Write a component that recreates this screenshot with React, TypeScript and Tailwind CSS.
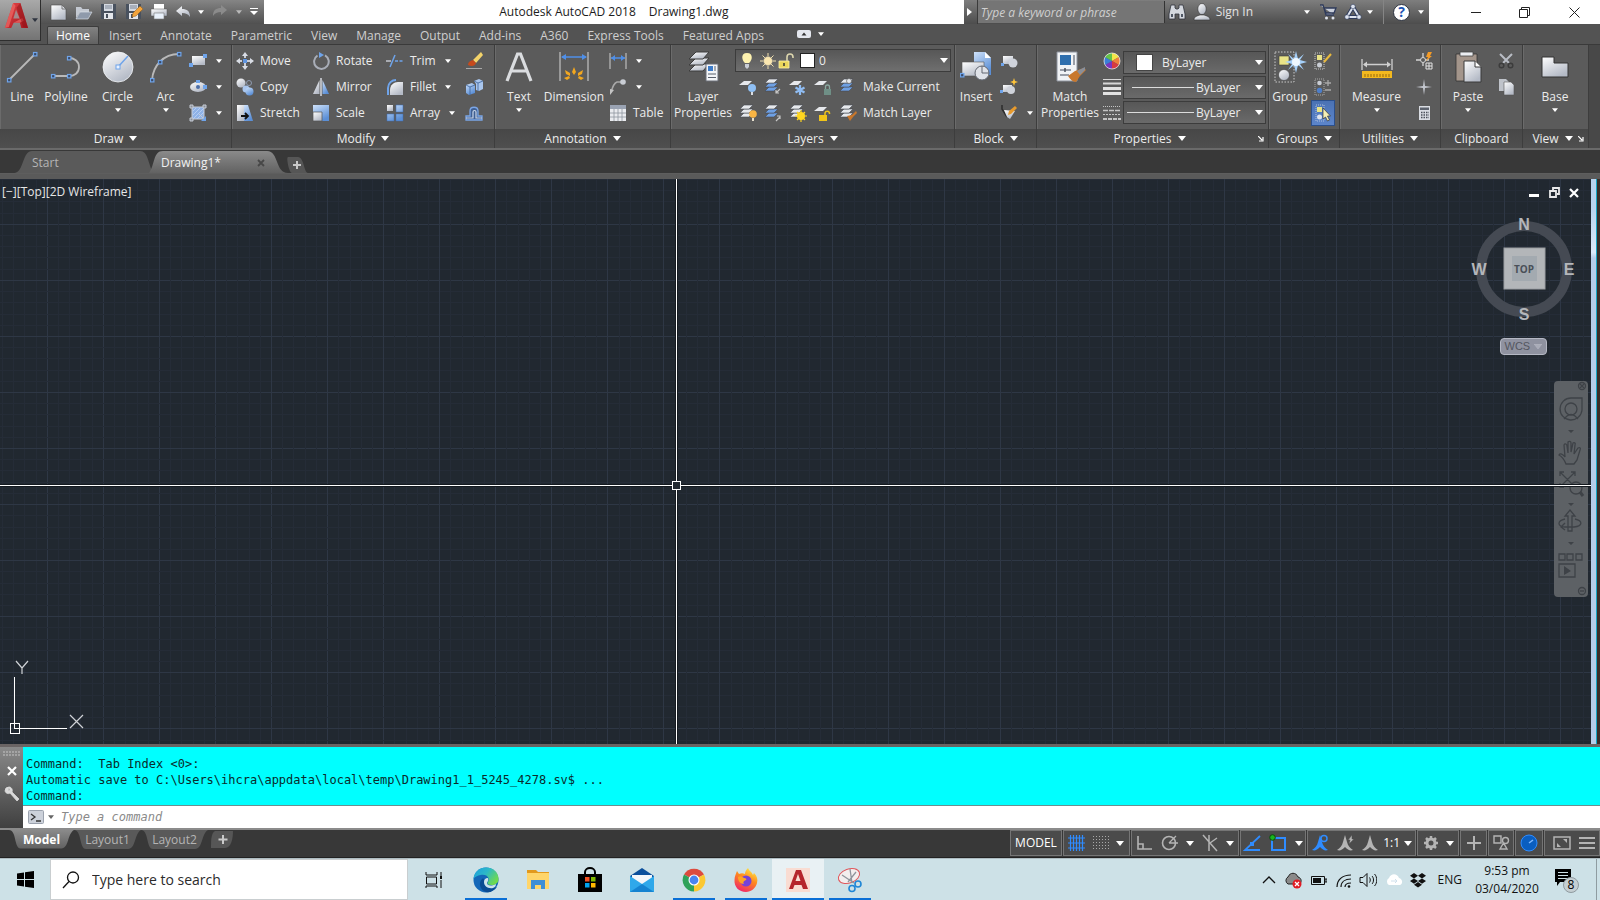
import type { ReactNode } from 'react'
import clsx from 'clsx'

const BLUE = '#6fa4ea'

interface IcoProps {
  w?: number
  h?: number
  box?: string
  className?: string
  children: ReactNode
}

function Ico({ w = 18, h = w, box, className, children }: IcoProps) {
  return (
    <svg width={w} height={h} viewBox={box ?? `0 0 ${w} ${h}`} fill="none" className={clsx('shrink-0', className)} aria-hidden="true">
      {children}
    </svg>
  )
}

function Arrow({ className = 'text-white', big }: { className?: string; big?: boolean }) {
  return (
    <svg width={big ? 8 : 6} height={big ? 5 : 4} viewBox="0 0 8 5" className={clsx('shrink-0', className)} aria-hidden="true">
      <path d="M0 0h8L4 5z" fill="currentColor" />
    </svg>
  )
}

function Grip({ x, y }: { x: number; y: number }) {
  return <rect x={x - 1.5} y={y - 1.5} width="3.4" height="3.4" fill="#3a4a66" stroke={BLUE} strokeWidth="1.2" />
}

function Defs() {
  return (
    <svg width="0" height="0" className="absolute" aria-hidden="true">
      <defs>
        <linearGradient id="silver" x1="0" y1="0" x2="0.6" y2="1">
          <stop offset="0" stopColor="#ffffff" />
          <stop offset="1" stopColor="#b4bac6" />
        </linearGradient>
        <linearGradient id="sky" x1="0" y1="0" x2="0.5" y2="1">
          <stop offset="0" stopColor="#cfe2fa" />
          <stop offset="1" stopColor="#5b8fd6" />
        </linearGradient>
        <linearGradient id="tab" x1="0" y1="0" x2="0" y2="1">
          <stop offset="0" stopColor="#8a8a8a" />
          <stop offset="1" stopColor="#626262" />
        </linearGradient>
        <linearGradient id="red" x1="0" y1="0" x2="1" y2="1">
          <stop offset="0" stopColor="#e8484a" />
          <stop offset="1" stopColor="#a3141c" />
        </linearGradient>
        <linearGradient id="edge" x1="0" y1="0" x2="1" y2="0.6">
          <stop offset="0" stopColor="#1b9de0" />
          <stop offset="0.5" stopColor="#2cb8c8" />
          <stop offset="1" stopColor="#6fdb4e" />
        </linearGradient>
        <linearGradient id="fox" x1="0.8" y1="0" x2="0.3" y2="1">
          <stop offset="0" stopColor="#fff04a" />
          <stop offset="0.45" stopColor="#ff8a1e" />
          <stop offset="1" stopColor="#f0246a" />
        </linearGradient>
      </defs>
    </svg>
  )
}

function LetterA({ size }: { size: number }) {
  return (
    <Ico w={size} box="0 0 26 28">
      <path d="M1 27 9.5 1h7.5L25 27h-7l-1.500-5.500H10L7.500 27z" fill="url(#red)" />
      <path d="m12.500 8-2.800 9h6.600z" fill="#a5898b" />
      <path d="M9.500 1 12 4 5 26l-4 1zM10 21.500l9-5 1.500 3-4 2z" fill="#ee6a66" opacity="0.7" />
      <path d="m17 1-4 5 7 20 5 1z" fill="#8e1118" opacity="0.5" />
    </Ico>
  )
}

/* ---------- title bar ---------- */

function Floppy() {
  return (
    <>
      <path d="M1 1h15v15H1z" fill="#49525f" />
      <path d="M4 1h9v7H4z" fill="#d5dae2" />
      <path d="M5 3h7M5 5h7" stroke="#7b8494" />
      <path d="M4 10h9v6H4z" fill="#e4e7ec" />
      <path d="M6 11h2v4H6z" fill="#49525f" />
    </>
  )
}

function QuickAccess() {
  return (
    <div className="flex h-6 items-center gap-[7px] bg-linear-to-b from-[#858585] to-[#505050] pr-[5px] pl-[50px]">
      <button aria-label="New">
        <Ico>
          <path d="M1 2h11l4 4v11H1z" fill="url(#silver)" stroke="#4b4b4b" strokeWidth="0.6" />
          <path d="M12 2v4h4" stroke="#666" strokeWidth="0.8" />
        </Ico>
      </button>
      <button aria-label="Open">
        <Ico>
          <path d="M1 4h5l1.500 2H14v3H5l-4 6z" fill="#c4c9d2" />
          <path d="M5 9h12l-4 7H1z" fill="#8f9aab" stroke="#e3e7ee" strokeWidth="0.6" />
        </Ico>
      </button>
      <button aria-label="Save"><Ico><Floppy /></Ico></button>
      <button aria-label="Save As">
        <Ico>
          <Floppy />
          <path d="m7 14 1-4 7-7 3 3-7 7z" fill="#f3a43c" stroke="#8a5a1a" strokeWidth="0.5" />
        </Ico>
      </button>
      <button aria-label="Plot">
        <Ico>
          <path d="M4 1h10v6H4z" fill="#fff" />
          <path d="M1 6h16v7H1z" fill="url(#silver)" stroke="#555" strokeWidth="0.5" />
          <path d="M4 10h10v6H4z" fill="#e9f1fb" stroke="#777" strokeWidth="0.6" />
        </Ico>
      </button>
      <button aria-label="Undo">
        <Ico w={16}><path d="M1 7 7 2v3c5 0 8 2 8 8-2-3-4-4-8-4v3z" fill="url(#silver)" /></Ico>
      </button>
      <Arrow />
      <button aria-label="Redo">
        <Ico><path d="M16 7 10 2v3C5 5 2 7 2 13c2-3 4-4 8-4v3z" fill="#8b8b8b" /></Ico>
      </button>
      <Arrow className="text-[#b9b9b9]" />
      <button aria-label="Customize Quick Access Toolbar">
        <Ico w={10}><path d="M1 1.500h8" stroke="#fff" /><path d="M1 4h8L5 8z" fill="#fff" /></Ico>
      </button>
    </div>
  )
}

function TitleBar() {
  return (
    <header className="relative flex h-6 bg-white">
      <QuickAccess />
      <button
        aria-label="Application menu"
        className="absolute top-0 left-0 z-10 flex h-[41px] w-[41px] items-start gap-[2px] border-r border-b border-[#2e2e2e] bg-linear-to-b from-[#a9a9a9] to-[#747474] pt-[2px] pl-[3px]"
      >
        <LetterA size={27} />
        <Arrow className="mt-4 text-[#2f3540]" />
      </button>
      <h1 className="flex flex-1 items-center justify-center gap-[13px] text-xs text-[#1c1c1c]">
        <span>Autodesk AutoCAD 2018</span>
        <span>Drawing1.dwg</span>
      </h1>
      <div className="flex items-center bg-linear-to-b from-[#7e7e7e] to-[#4d4d4d]">
        <button aria-label="Collapse search" className="flex h-6 w-[14px] items-center justify-center border-r border-[#3a3a3a]">
          <Ico w={6} h={8}><path d="M0 0v8l5-4z" fill="#fff" /></Ico>
        </button>
        <input
          aria-label="Search"
          placeholder="Type a keyword or phrase"
          className="h-[22px] w-[187px] border-r border-[#333] bg-[#757575] px-[3px] text-xs text-white italic placeholder:text-[#cfcfcf]"
        />
        <button aria-label="Find" className="ml-[3px]">
          <Ico>
            <path d="M3 2h4v3l1 1h2l1-1V2h4l2 9v5h-6v-5H7v5H1v-5z" fill="#d4d8df" stroke="#30343c" strokeWidth="0.8" />
            <path d="M3 11h2v3H3zM13 11h2v3h-2z" fill="#4f5765" />
          </Ico>
        </button>
        <button className="ml-[7px] flex items-center gap-[5px] text-xs text-[#e3e3e3]">
          <Ico>
            <ellipse cx="9" cy="6" rx="4.200" ry="5.500" fill="url(#silver)" stroke="#333" strokeWidth="0.6" />
            <path d="M1 17c0-4 4-4 6-5h4c2 1 6 1 6 5z" fill="url(#silver)" stroke="#333" strokeWidth="0.6" />
          </Ico>
          Sign In
        </button>
        <Arrow className="ml-[51px] text-white" />
        <button aria-label="App Store" className="ml-[9px]">
          <Ico>
            <path d="M1 2h3l3 10h8M5 5h12l-2 5H7z" fill="#c9cfdb" stroke="#2e3a5a" strokeWidth="1.3" />
            <circle cx="7.500" cy="15" r="1.500" fill="#dfe4ee" />
            <circle cx="14" cy="15" r="1.500" fill="#dfe4ee" />
          </Ico>
        </button>
        <button aria-label="Autodesk A360" className="ml-[7px]">
          <Ico>
            <path d="M9 4 3 14h12z" stroke="#2e3a5a" strokeWidth="4" strokeLinejoin="round" />
            <path d="M9 4 3 14h12z" stroke="#dde3ef" strokeWidth="2" />
            <circle cx="9" cy="3.500" r="2.300" fill="#dde3ef" stroke="#2e3a5a" strokeWidth="0.6" />
            <circle cx="3" cy="14" r="2.300" fill="#dde3ef" stroke="#2e3a5a" strokeWidth="0.6" />
            <circle cx="15" cy="14" r="2.300" fill="#dde3ef" stroke="#2e3a5a" strokeWidth="0.6" />
          </Ico>
        </button>
        <Arrow className="ml-[5px] text-white" />
        <button aria-label="Help" className="ml-[10px] flex h-6 items-center gap-2 border-l border-[#858585] pr-[5px] pl-[9px]">
          <span className="flex h-[17px] w-[17px] items-center justify-center rounded-full border border-[#2d3340] bg-white text-sm leading-none font-bold text-[#1d54b4]">
            ?
          </span>
          <Arrow />
        </button>
      </div>
      <div className="flex items-center text-[#222]">
        <button aria-label="Minimize" className="flex w-[71px] justify-end pr-[19px]">
          <Ico w={10}><path d="M0 5.500h10" stroke="currentColor" /></Ico>
        </button>
        <button aria-label="Restore" className="flex w-12 justify-center">
          <Ico w={11}><path d="M.5 2.500h8v8h-8zM2.500 2V.5h8v8H9" stroke="currentColor" /></Ico>
        </button>
        <button aria-label="Close" className="flex w-[52px] justify-center">
          <Ico w={11}><path d="m.5.5 10 10M10.500.5l-10 10" stroke="currentColor" /></Ico>
        </button>
      </div>
    </header>
  )
}

const TABS = ['Insert', 'Annotate', 'Parametric', 'View', 'Manage', 'Output', 'Add-ins', 'A360', 'Express Tools', 'Featured Apps']

function RibbonTabs() {
  return (
    <nav className="flex h-[21px] items-end border-b border-[#3a3a3a] bg-[#535353] pl-[47px] text-xs text-[#cfcfcf]">
      <button className="h-[18px] rounded-t-xs border border-b-0 border-[#3c3c3c] bg-linear-to-b from-[#828282] to-[#626262] px-2 leading-4 text-white">
        Home
      </button>
      {TABS.map(tab => (
        <button key={tab} className="h-[18px] pr-[9px] pl-[10px] leading-[17px]">
          {tab}
        </button>
      ))}
      <button aria-label="Minimize ribbon" className="mb-[6px] ml-6 flex items-center gap-[7px]">
        <Ico w={14} h={8}>
          <rect width="14" height="8" rx="2" fill="#e4e7ee" />
          <path d="M7 2.500 4.500 5.500h5z" fill="#333" />
        </Ico>
        <Arrow />
      </button>
    </nav>
  )
}

/* ---------- ribbon ---------- */

interface PanelProps {
  title: string
  className: string
  arrow?: boolean
  launcher?: boolean
  children: ReactNode
}

function Panel({ title, className, arrow = true, launcher, children }: PanelProps) {
  return (
    <section className={clsx('flex shrink-0 flex-col border-r border-[#3d3d3d] shadow-[inset_1px_0_0_#6b6b6b]', className)}>
      <div className="flex h-[84px] items-start pt-[3px]">{children}</div>
      <div className="flex h-[19px] items-center bg-linear-to-b from-[#474747] to-[#4f4f4f] px-1">
        <h2 className="flex flex-1 items-center justify-center gap-[6px] text-xs">
          {title}
          {arrow && <Arrow big />}
        </h2>
        {launcher && (
          <button aria-label={`${title} settings`}>
            <Ico w={6}><path d="M0 0l4 4M5 1v4H1" stroke="#fff" strokeWidth="1.2" /></Ico>
          </button>
        )}
      </div>
    </section>
  )
}

interface BigProps {
  label: string
  label2?: string
  icon: ReactNode
  arrow?: boolean
  className: string
}

function Big({ label, label2, icon, arrow, className }: BigProps) {
  return (
    <button className={clsx('flex shrink-0 flex-col items-center pt-[3px] text-xs leading-4', className)}>
      <span className="flex h-[32px] items-center">{icon}</span>
      <span className="mt-[6px]">{label}</span>
      {label2 && <span>{label2}</span>}
      {arrow && <Arrow className="mt-[3px] text-white" />}
    </button>
  )
}

interface SmallProps {
  label: string
  text?: boolean
  icon: ReactNode
  arrow?: boolean
  active?: boolean
}

function Small({ label, text = true, icon, arrow, active }: SmallProps) {
  return (
    <button
      aria-label={label}
      className={clsx('flex h-[26px] items-center gap-[6px] text-xs', active && 'bg-linear-to-b from-[#4a71b3] to-[#5d86cc] outline -outline-offset-1 outline-[#2b4f8c]')}
    >
      {icon}
      {text && <span>{label}</span>}
      {arrow && <Arrow className="ml-[3px] text-white" />}
    </button>
  )
}

function DrawPanel() {
  return (
    <Panel title="Draw" className="w-[232px]">
      <Big className="w-[44px]" label="Line" icon={<Ico w={32}><path d="M4 28 28 4" stroke="#b9b9b9" strokeWidth="1.800" /><Grip x={3} y={29} /><Grip x={29} y={3} /></Ico>} />
      <Big
        className="w-[44px]"
        label="Polyline"
        icon={<Ico w={32}><path d="M3 25h17c4 0 9-3 9-9s-5-9-10-9" stroke="#b9b9b9" strokeWidth="1.800" /><Grip x={3} y={25} /><Grip x={19} y={25} /><Grip x={19} y={7} /></Ico>}
      />
      <Big
        className="w-[59px]"
        label="Circle"
        arrow
        icon={
          <Ico w={32}>
            <circle cx="16" cy="16" r="15" fill="url(#silver)" stroke="#f3f5f8" strokeWidth="0.8" />
            <path d="M16 16 26 5" stroke={BLUE} strokeWidth="1.500" />
            <rect x="14" y="14" width="4" height="4" fill="#e8f1ff" stroke={BLUE} />
          </Ico>
        }
      />
      <Big
        className="w-[37px]"
        label="Arc"
        arrow
        icon={<Ico w={32}><path d="M2 29C3 15 13 3 29 3" stroke="#b9b9b9" strokeWidth="1.800" /><Grip x={2} y={29} /><Grip x={10} y={11} /><Grip x={29} y={3} /></Ico>}
      />
      <div className="ml-[5px]">
        <Small
          label="Rectangle" text={false} arrow
          icon={<Ico><path d="M3 4h13v9H3z" fill="url(#silver)" /><path d="M0 11h4v4H0zM14 2h4v4h-4z" fill={BLUE} /></Ico>}
        />
        <Small
          label="Ellipse" text={false} arrow
          icon={<Ico><ellipse cx="9" cy="9" rx="8" ry="5" fill="url(#silver)" /><circle cx="9" cy="9" r="2" fill="#4c6ea8" /><path d="M7 2h4v3H7zM14 7h4v4h-4z" fill={BLUE} /></Ico>}
        />
        <Small
          label="Hatch" text={false} arrow
          icon={
            <Ico>
              <path d="M3 3h12v12H3z" fill="#8fb2e6" stroke="#c9cfd9" />
              <path d="m4 7 3-3M4 11l7-7M4 15 15 4M8 15l7-7" stroke="#b5cdf2" />
              <path d="M1 1h3v3H1zM14 1h3v3h-3zM1 14h3v3H1zM10 10l7 7" stroke="#c6ccd6" fill="#8b9099" />
              <path d="m12 17 5-5v5z" fill={BLUE} />
            </Ico>
          }
        />
      </div>
    </Panel>
  )
}

function ModifyPanel() {
  return (
    <Panel title="Modify" className="w-[263px]">
      <div className="ml-1 w-[76px]">
        <Small
          label="Move"
          icon={
            <Ico>
              <path d="M9 3v12M3 9h12" stroke="#c9ced8" strokeWidth="2" strokeDasharray="3 1" />
              <path d="m9 0 3 4H6zM9 18l3-4H6zM0 9l4-3v6zM18 9l-4-3v6z" fill="#d9dde5" />
              <path d="M7 7h4v4H7z" fill="#5f94df" />
            </Ico>
          }
        />
        <Small
          label="Copy"
          icon={
            <Ico>
              <circle cx="5" cy="5" r="4.500" fill="url(#silver)" />
              <circle cx="13" cy="5" r="2.500" stroke="#8f9bb0" />
              <circle cx="10" cy="11" r="3.500" fill="#a9c6ee" />
              <circle cx="13.500" cy="13.500" r="4" fill="url(#sky)" />
            </Ico>
          }
        />
        <Small
          label="Stretch"
          icon={
            <Ico>
              <path d="M1 1h7v16H1z" fill="url(#silver)" />
              <path d="M8 1h4l5 16H8z" fill="url(#sky)" />
              <path d="M5 12h7M9 9l3 3-3 3" stroke="#111" strokeWidth="1.800" />
            </Ico>
          }
        />
      </div>
      <div className="w-[74px]">
        <Small
          label="Rotate"
          icon={<Ico><path d="M5.500 3.500A7.300 7.300 0 1 0 13 3.300" stroke="#a9aeb8" strokeWidth="2" /><path d="M7 0l5 3-5 3z" fill={BLUE} /></Ico>}
        />
        <Small
          label="Mirror"
          icon={<Ico><path d="M7.500 2v14H1z" fill="url(#silver)" /><path d="M10.500 2v14H17z" fill="url(#sky)" /><path d="M9 0v18" stroke="#d6d9df" strokeWidth="1.500" /></Ico>}
        />
        <Small label="Scale" icon={<Ico><path d="M1 1h16v16H1z" fill="url(#sky)" /><path d="M1 8h9v9H1z" fill="url(#silver)" stroke="#555" strokeWidth="0.7" /></Ico>} />
      </div>
      <div className="w-[79px]">
        <Small
          label="Trim" arrow
          icon={<Ico><path d="M0 9h5" stroke="#c3c7cf" strokeWidth="1.500" /><path d="M9 9h9" stroke={BLUE} strokeWidth="1.500" strokeDasharray="3 1.500" /><path d="M4 15 9 3" stroke={BLUE} strokeWidth="1.500" /></Ico>}
        />
        <Small label="Fillet" arrow icon={<Ico><path d="M2 17V10c0-5 4-8 8-8" stroke={BLUE} strokeWidth="2" /><path d="M4 17v-5c0-5 4-8 8-8h5v13z" fill="url(#silver)" /></Ico>} />
        <Small
          label="Array" arrow
          icon={<Ico><path d="M1 1h6v6H1z" fill="url(#silver)" /><path d="M10 1h7v7h-7zM1 10h7v7H1zM10 10h7v7h-7z" fill="url(#sky)" stroke="#3f6fb5" strokeWidth="0.5" /></Ico>}
        />
      </div>
      <div>
        <Small
          label="Erase" text={false}
          icon={<Ico><path d="M1 16.500h16" stroke="#a9a9a9" /><path d="m8 8 8-8 2 3-7 8z" fill="#f3d36a" /><path d="M3 13c0-3 2-4 5-5l3 3c-1 3-4 4-8 2z" fill="#c64a1c" /></Ico>}
        />
        <Small
          label="Explode" text={false}
          icon={<Ico><path d="m1 7 6-2 3 2v8l-6 2-3-2z" fill="url(#sky)" /><path d="m9 3 5-2 4 2v8l-4 2-3-1V6z" fill="#a9c6ee" /><path d="m9 3 4 2 5-2M13 5v8M1 7l4 2 5-2M5 9v8" stroke="#3c6299" strokeWidth="0.8" /></Ico>}
        />
        <Small
          label="Offset" text={false}
          icon={
            <Ico>
              <path d="M1 12h4V7c0-5 8-5 8 0v5h4v4H1z" fill="#3f5f92" stroke="#7ba6e6" strokeWidth="1.300" />
              <path d="M1 14h7V8c0-2 3-2 3 0v6h6" stroke="#c9d6ea" strokeWidth="1.200" />
            </Ico>
          }
        />
      </div>
    </Panel>
  )
}

function AnnotationPanel() {
  return (
    <Panel title="Annotation" className="w-[176px]">
      <Big className="w-[48px]" label="Text" arrow icon={<Ico w={28} h={32}><path d="M2 30 12.500 3h3L26 30M6 20h16" stroke="#dadcdf" strokeWidth="3.200" /></Ico>} />
      <Big
        className="w-[62px]"
        label="Dimension"
        icon={
          <Ico w={32}>
            <path d="M2 1v29M30 1v29" stroke="#a9a9a9" strokeWidth="1.600" />
            <path d="M4 6h24" stroke="#4f8fe8" strokeWidth="1.500" />
            <path d="m3 6 5-3v6zM29 6l-5-3v6z" fill="#4f8fe8" />
            <path d="m16 16 2 5-2 3-2-3zM7 19l5 3v3l-4-2zM25 19l-5 3v3l4-2zM6 27l5-2 1 2-3 2zM26 27l-5-2-1 2 3 2z" fill="#f2a71f" />
          </Ico>
        }
      />
      <div className="ml-1">
        <Small
          label="Linear" text={false} arrow
          icon={<Ico><path d="M1 1v16M17 1v16" stroke="#a9a9a9" strokeWidth="1.500" /><path d="M2 6h14" stroke="#4f8fe8" strokeWidth="1.500" /><path d="m2 6 4-3v6zM16 6l-4-3v6z" fill="#4f8fe8" /></Ico>}
        />
        <Small
          label="Leader" text={false} arrow
          icon={<Ico><path d="M2 14C4 8 5 5 8 4h4" stroke="#a9a9a9" strokeWidth="1.400" /><path d="m1 17 0-6 4 1z" fill="#c4c4c4" /><circle cx="14" cy="4" r="2.800" fill="#c9cdd4" /></Ico>}
        />
        <Small
          label="Table"
          icon={<Ico><path d="M1 1h16v16H1z" fill="#e9ebef" /><path d="M1 1h16v4H1z" fill="#9aa3b3" /><path d="M1 9h16M1 13h16M5 5v12M9 5v12M13 5v12" stroke="#8d94a0" strokeWidth="0.8" /></Ico>}
        />
      </div>
    </Panel>
  )
}

function Stack({ blue }: { blue?: boolean }) {
  return (
    <>
      {[9, 5, 1].map(y => (
        <path key={y} d={`M5 ${y}h9l-4 4H1z`} fill={blue && y > 1 ? '#6ea0e4' : '#e6e8ec'} stroke="#464b54" strokeWidth="0.6" />
      ))}
    </>
  )
}

function Plate() {
  return <path d="M5 3h8l-4 4H0z" fill="#e6e8ec" />
}

const LAYER_TOOLS_TOP: { label: string; icon: ReactNode }[] = [
  { label: 'Layer Off', icon: <><Plate /><circle cx="13" cy="10" r="4" fill="#8fc0f5" /><path d="M12 14h2v3h-2z" fill="#d9dde3" /></> },
  { label: 'Isolate', icon: <><Stack blue /><path d="m16 11-4 4M12 12v3h3" stroke="#c7c7c7" strokeWidth="1.200" /></> },
  { label: 'Freeze', icon: <><Plate /><path d="M11 7v10M6.500 9.500l9 5M15.500 9.500l-9 5" stroke="#8fbcf2" strokeWidth="2.200" /></> },
  { label: 'Lock', icon: <><Plate /><path d="M10 11h7v6h-7z" fill="#6f8f86" /><path d="M11.500 11V9a2 2 0 0 1 4 0v2" stroke="#8aa79f" strokeWidth="1.300" /></> },
]

const LAYER_TOOLS_BOTTOM: { label: string; icon: ReactNode }[] = [
  { label: 'Turn All Layers On', icon: <><Stack /><circle cx="14" cy="10" r="3.800" fill="#f9b544" /><path d="M13 14h2v3h-2z" fill="#e8e1cf" /></> },
  { label: 'Unisolate', icon: <><Stack blue /><path d="m12 17 4-4M13 12h3v3" stroke="#c7c7c7" strokeWidth="1.200" /></> },
  { label: 'Thaw All Layers', icon: <><Stack /><circle cx="12" cy="12" r="4" fill="#ffd61f" /><path d="M12 6v12M6 12h12M8 8l8 8M16 8l-8 8" stroke="#ffd61f" strokeWidth="1.200" /></> },
  { label: 'Unlock', icon: <><Plate /><path d="M5 11h8v6H5z" fill="#f0c419" /><path d="M11 11V9a2.300 2.300 0 0 1 4.500 0v1" stroke="#f0c419" strokeWidth="1.500" /></> },
]

function LayersPanel() {
  return (
    <Panel title="Layers" className="w-[284px]">
      <Big
        className="w-[64px]"
        label="Layer"
        label2="Properties"
        icon={
          <Ico w={32}>
            {[13, 7, 1].map(y => (
              <path key={y} d={`M9 ${y}h13l-6 7H2z`} fill="url(#silver)" stroke="#3d3d3d" />
            ))}
            <path d="M19 13h12v17H19z" fill="#f3f5f8" stroke="#6a6f78" />
            <path d="M21 15h5v5h-5z" fill="#3d7cc9" />
            <path d="M28 15v5M21 23h8M21 26.500h8" stroke="#59606c" />
          </Ico>
        }
      />
      <div className="flex-1 pr-[3px]">
        <div className="mt-px mb-[2px] flex h-[23px] items-center border border-[#3c3c3c] bg-linear-to-b from-[#575757] to-[#6f6f6f] pl-[2px]">
          <Ico><path d="M9 1c7 0 5 8 2 10H7C4 9 2 1 9 1z" fill="#fff3b0" /><path d="M7 12h4v3l-2 2-2-2z" fill="#c9cdd6" /></Ico>
          <Ico className="ml-[3px]"><path d="M9 1v16M1 9h16M3.500 3.500l11 11M14.500 3.500l-11 11" stroke="#f0dfae" /><circle cx="9" cy="9" r="4.500" fill="#fbe7b0" stroke="#777" strokeWidth="0.5" /></Ico>
          <Ico><path d="M2 9h10v7H2z" fill="#ead65c" stroke="#fff2a5" strokeWidth="0.8" /><path d="M10 9V5c0-4 6-4 6 0v1" stroke="#ddd6ae" strokeWidth="1.600" /><path d="M7 11v3" stroke="#333" strokeWidth="1.500" /></Ico>
          <span className="ml-[5px] h-[15px] w-[15px] border border-[#222] bg-white" />
          <select aria-label="Layer" className="ml-1 flex-1 appearance-none bg-transparent text-xs outline-none">
            <option>0</option>
          </select>
          <Arrow big className="mr-[2px] text-white" />
        </div>
        <div className="flex gap-[7px] pl-1">
          {LAYER_TOOLS_TOP.map(t => (
            <Small key={t.label} label={t.label} text={false} icon={<Ico>{t.icon}</Ico>} />
          ))}
          <Small label="Make Current" icon={<Ico><Stack blue /><circle cx="10" cy="3" r="2.500" fill="#e4e7ec" stroke="#555" strokeWidth="0.6" /></Ico>} />
        </div>
        <div className="flex gap-[7px] pl-1">
          {LAYER_TOOLS_BOTTOM.map(t => (
            <Small key={t.label} label={t.label} text={false} icon={<Ico>{t.icon}</Ico>} />
          ))}
          <Small label="Match Layer" icon={<Ico><Stack /><path d="m8 12 5-1 4-4 1 2-4 4-3 4z" fill="#c9772b" /></Ico>} />
        </div>
      </div>
    </Panel>
  )
}

function BlockPanel() {
  return (
    <Panel title="Block" className="w-[82px]">
      <Big
        className="w-[42px]"
        label="Insert"
        icon={
          <Ico w={32}>
            <path d="M14 1h11l6 6v17H14z" fill="url(#sky)" />
            <path d="M25 1v6h6" fill="#fff" />
            <path d="M2 11h22v14H2z" fill="url(#silver)" stroke="#555" strokeWidth="0.6" />
            <circle cx="22" cy="22" r="7" fill="#dfe2e8" stroke="#626771" />
            <path d="M22 15v7h7" stroke="#626771" />
            <Grip x={2} y={24} />
          </Ico>
        }
      />
      <div className="ml-[3px]">
        <Small label="Create" text={false} icon={<Ico><path d="M3 4h10v8H3z" fill="url(#silver)" /><circle cx="13" cy="11" r="4.500" fill="#cfd3db" /><path d="M1 11h3v3H1z" fill={BLUE} /></Ico>} />
        <Small
          label="Edit" text={false}
          icon={<Ico><path d="M3 7h9v7H3z" fill="url(#silver)" /><circle cx="11" cy="12" r="4" fill="#cfd3db" /><path d="m14 0 1 3 3 1-3 1-1 3-1-3-3-1 3-1z" fill="#ffc53a" /><path d="M0 12h3v3H0z" fill={BLUE} /></Ico>}
        />
        <Small
          label="Edit Attributes" text={false} arrow
          icon={<Ico><path d="M2 1v4l5 8" stroke="#2c2c2c" strokeWidth="1.500" /><path d="m4 6 11 1-5 8-3-2z" fill="url(#silver)" /><path d="m8 11 1-4 6-5 2 2-6 6z" fill="#e79a2d" /></Ico>}
        />
      </div>
    </Panel>
  )
}

function PropertySelect({ label, before, inset }: { label: string; before: ReactNode; inset: string }) {
  return (
    <div className="mb-[2px] flex h-[23px] items-center border border-[#3c3c3c] bg-linear-to-b from-[#575757] to-[#6a6a6a]">
      {before}
      <select aria-label={label} className={clsx('min-w-0 flex-1 appearance-none bg-transparent text-xs outline-none', inset)}>
        <option>ByLayer</option>
      </select>
      <Arrow big className="mr-[2px] text-white" />
    </div>
  )
}

function PropertiesPanel() {
  return (
    <Panel title="Properties" className="w-[232px]" launcher>
      <Big
        className="w-[66px]"
        label="Match"
        label2="Properties"
        icon={
          <Ico w={32}>
            <path d="M3 1h20v29H3z" fill="#f1f3f6" stroke="#8d939e" />
            <path d="M6 4h11v10H6z" fill="#2f6fae" />
            <path d="M20 4v10M6 19h11M6 24h9" stroke="#7c828e" strokeWidth="1.500" />
            <path d="M11 17v4" stroke="#4a505c" strokeWidth="1.500" />
            <path d="m14 25 7-5 9-3 2 2-6 6-4 6c-3 0-6-3-8-6z" fill="#c8772c" />
            <path d="m23 20 8-4v3l-5 5z" fill="#8a8f99" />
          </Ico>
        }
      />
      <div className="flex w-[20px] flex-col">
        <Small
          label="Object Color" text={false}
          icon={
            <Ico>
              <path d="M9 9V1a8 8 0 0 1 7 4z" fill="#f3e648" />
              <path d="m9 9 7-4a8 8 0 0 1 0 8z" fill="#f0803c" />
              <path d="m9 9 7 4a8 8 0 0 1-7 4z" fill="#d83a3f" />
              <path d="M9 9v8a8 8 0 0 1-7-4z" fill="#7a35c0" />
              <path d="m9 9-7 4a8 8 0 0 1 0-8z" fill="#3b7fd8" />
              <path d="M9 9 2 5a8 8 0 0 1 7-4z" fill="#63c24a" />
              <circle cx="9" cy="9" r="8" stroke="#e5e5e5" strokeWidth="0.8" />
            </Ico>
          }
        />
        <Small label="Lineweight" text={false} icon={<Ico><path d="M0 1.500h18" stroke="#d7d7d7" /><path d="M0 5.500h18" stroke="#d7d7d7" strokeWidth="2" /><path d="M0 10.500h18M0 15.500h18" stroke="#e2e2e2" strokeWidth="3" /></Ico>} />
        <Small
          label="Linetype" text={false}
          icon={<Ico><path d="M0 2.500h18" stroke="#c4c4c4" strokeDasharray="1 1" /><path d="M0 6.500h18" stroke="#c4c4c4" strokeWidth="1.500" strokeDasharray="5 1" /><path d="M0 10.500h18" stroke="#c4c4c4" strokeDasharray="2 1" /><path d="M0 15h18" stroke="#c4c4c4" strokeWidth="2" strokeDasharray="4 1" /></Ico>}
        />
      </div>
      <div className="flex-1 pt-[3px] pr-[2px]">
        <PropertySelect label="Color" inset="ml-[9px]" before={<span className="ml-3 h-[17px] w-[17px] border border-[#444] bg-white" />} />
        <PropertySelect label="Weight" inset="ml-[2px]" before={<span className="ml-2 h-px w-[62px] bg-[#dcdcdc]" />} />
        <PropertySelect label="Line style" inset="ml-[2px]" before={<span className="ml-[3px] h-px w-[67px] bg-[#dcdcdc]" />} />
      </div>
    </Panel>
  )
}

function GroupsPanel() {
  return (
    <Panel title="Groups" className="w-[71px]">
      <Big
        className="w-[42px]"
        label="Group"
        icon={
          <Ico w={34} h={32}>
            <path d="M2 1h19v30H2z" stroke="#c9c9c9" strokeDasharray="1.500 1.500" />
            <path d="M6 5h10v9H6z" fill="#e9e387" stroke="#3d3d3d" strokeWidth="0.6" />
            <circle cx="11" cy="24" r="5.500" fill="url(#silver)" stroke="#3d3d3d" strokeWidth="0.6" />
            <path d="m23 0 2 8 6-5-4 6 7 2-7 2 4 6-6-5-2 8-2-8-6 5 4-6-7-2 7-2-4-6 6 5z" fill="#a5d0fa" />
            <circle cx="23" cy="11" r="4" fill="#eef7ff" />
          </Ico>
        }
      />
      <div>
        <div className="px-[3px]">
          <Small
            label="Ungroup" text={false}
            icon={<Ico><path d="M1 1h9v16H1z" stroke="#c9c9c9" strokeDasharray="1 1" /><path d="M3 3h5v5H3z" fill="#e9e387" /><circle cx="5.500" cy="13" r="2.500" fill="#c9cdd4" /><path d="m10 10 7-8" stroke="#e8b93d" strokeWidth="2" /></Ico>}
          />
          <Small
            label="Group Edit" text={false}
            icon={<Ico><path d="M1 1h9v16H1z" stroke="#a9a9a9" strokeDasharray="1 1" /><circle cx="5.500" cy="5" r="2.300" fill="#c9cdd4" /><circle cx="5.500" cy="12.500" r="2.700" fill="#4d7ec9" /><path d="M11 5h6M14 2v6M11 12h6" stroke="#a9a9a9" strokeWidth="1.300" /></Ico>}
          />
        </div>
        <Small
          label="Group Selection" text={false} active
          icon={<Ico w={24} h={18}><path d="M5 1h8v16H5z" stroke="#aebfdd" strokeDasharray="1 1" /><path d="M6 3h5v5H6z" fill="#e9e387" /><circle cx="8.500" cy="13" r="2.500" fill="#dfe4ee" /><path d="M12 4v11l2.500-2 2 4 2-1-2-4h3z" fill="#f5efb5" stroke="#333" strokeWidth="0.7" /></Ico>}
        />
      </div>
    </Panel>
  )
}

function UtilitiesPanel() {
  return (
    <Panel title="Utilities" className="w-[101px]">
      <Big
        className="w-[73px]"
        label="Measure"
        arrow
        icon={
          <Ico w={32}>
            <path d="M1 8v11M31 8v11M3 13.500h26" stroke="#cfcfcf" strokeWidth="1.300" />
            <path d="m2 13.500 4-3v6zM30 13.500l-4-3v6z" fill="#cfcfcf" />
            <path d="M1 20h30v7H1z" fill="#f3b91f" />
            <path d="M4 23v3M7 23v3M10 23v3M13 23v3M16 23v3M19 23v3M22 23v3M25 23v3M28 23v3" stroke="#96690f" />
          </Ico>
        }
      />
      <div className="ml-[2px]">
        <Small
          label="Quick Select" text={false}
          icon={<Ico><path d="M8 1v13M1 8h13" stroke="#d5d5d5" strokeWidth="1.300" /><circle cx="8" cy="8" r="2.500" fill="#5a5a5a" stroke="#d5d5d5" /><path d="m13 0-2 5h2l-2 4 6-5h-2l2-4z" fill="#f59b26" /><path d="M11 11h6v6h-6zM14 11v6M11 14h6" stroke="#e2e2e2" /></Ico>}
        />
        <Small label="Point" text={false} icon={<Ico><path d="m9 1 1 7 7 1-7 1-1 7-1-7-7-1 7-1z" fill="#c4c8cf" /></Ico>} />
        <Small label="Calculator" text={false} icon={<Ico><path d="M4 2h11v14H4z" fill="#d9dce2" /><path d="M5 3.500h9V6H5z" fill="#5c626d" /><path d="M6 8.500h8M6 11h8M6 13.500h8" stroke="#4b505a" strokeWidth="1.500" strokeDasharray="1.500 1" /></Ico>} />
      </div>
    </Panel>
  )
}

function ClipboardPanel() {
  return (
    <Panel title="Clipboard" className="w-[82px]" arrow={false}>
      <Big
        className="w-[54px]"
        label="Paste"
        arrow
        icon={
          <Ico w={28} h={32}>
            <path d="M2 3h21v27H2z" fill="#a3958b" stroke="#333" strokeWidth="0.8" />
            <path d="M6 1h13v4H6z" fill="#eceef2" stroke="#444" strokeWidth="0.8" />
            <path d="M10 10h11l6 6v15H10z" fill="url(#silver)" stroke="#3b3b3b" />
            <path d="M21 10v6h6" fill="#fff" stroke="#3b3b3b" />
          </Ico>
        }
      />
      <div className="ml-[2px]">
        <Small label="Cut" text={false} icon={<Ico><path d="M3 2 12 11M15 2 6 11" stroke="#b9bdc5" strokeWidth="2" /><circle cx="4.500" cy="13.500" r="2.300" stroke="#3c3c3c" strokeWidth="1.500" /><circle cx="13.500" cy="13.500" r="2.300" stroke="#3c3c3c" strokeWidth="1.500" /></Ico>} />
        <Small label="Copy Clip" text={false} icon={<Ico><path d="M2 1h7l3 3v9H2z" fill="#bfc3ca" /><path d="M7 4h7l3 3v10H7z" fill="url(#silver)" stroke="#555" strokeWidth="0.6" /></Ico>} />
      </div>
    </Panel>
  )
}

function Ribbon() {
  return (
    <div className="flex overflow-hidden border-b-2 border-[#6a6a6a] bg-[#5b5b5b] text-[#ececec]">
      <DrawPanel />
      <ModifyPanel />
      <AnnotationPanel />
      <LayersPanel />
      <BlockPanel />
      <PropertiesPanel />
      <GroupsPanel />
      <UtilitiesPanel />
      <ClipboardPanel />
      <Panel title="View" className="w-[66px]" launcher>
        <Big className="w-[64px]" label="Base" arrow icon={<Ico w={28} h={22}><path d="M1 1h12v6h14v14H1z" fill="url(#silver)" stroke="#333" /></Ico>} />
      </Panel>
      <div className="flex-1 bg-[#484848]" />
    </div>
  )
}

/* ---------- drawing area ---------- */

function FileTabs() {
  return (
    <div className="flex h-6 items-end border-b border-[#5e5e5e] bg-[#383838] pl-[14px] text-xs">
      <button className="relative h-[22px] w-[139px] pl-[18px] text-left leading-6 text-[#b5b5b5]">
        <svg viewBox="0 0 139 22" className="absolute inset-0" aria-hidden="true">
          <path d="M0 22c10 0 8-22 18-22h108c8 0 8 12 13 22z" fill="#5a5a5a" />
        </svg>
        <span className="relative">Start</span>
      </button>
      <div className="relative -ml-1 flex h-[22px] w-[139px] items-center justify-between pt-[2px] pr-[23px] pl-3 text-[#f0f0f0]">
        <svg viewBox="0 0 139 22" className="absolute inset-0" aria-hidden="true">
          <path d="M0 22C6 14 4 0 14 0h104c12 0 8 22 21 22z" fill="url(#tab)" />
        </svg>
        <button className="relative">Drawing1*</button>
        <button aria-label="Close tab" className="relative">
          <Ico w={8}><path d="m1 1 6 6M7 1 1 7" stroke="#474747" strokeWidth="1.800" /></Ico>
        </button>
      </div>
      <button aria-label="New drawing" className="-ml-[2px]">
        <Ico w={22} h={16}>
          <path d="M2 0h10c6 0 6 16 10 16H6C3 16 0 0 2 0z" fill="#565656" />
          <path d="M11 4v8M7 8h8" stroke="#c9c9c9" strokeWidth="2" />
        </Ico>
      </button>
    </div>
  )
}

const GRID_STEP = 11.21
const GRID_LINES = Array.from({ length: 240 }, (_, i) => i)

function GridLines() {
  return (
    <svg className="absolute inset-0 h-full w-full" shapeRendering="crispEdges" aria-hidden="true">
      {GRID_LINES.map(i => {
        const x = Math.round(2 + i * GRID_STEP)
        const y = Math.round(i * GRID_STEP)
        const major = i % 5 === 4
        return (
          <g key={i} fill={major ? '#2e3745' : '#252c37'}>
            <rect x={x} y="0" width="1" height="100%" />
            <rect x="0" y={y} width="100%" height="1" />
          </g>
        )
      })}
    </svg>
  )
}

function ViewCube() {
  return (
    <div className="absolute top-[34px] right-4 flex flex-col items-center">
      <svg width="104" height="112" viewBox="0 0 104 112" aria-label="ViewCube">
        <circle cx="53" cy="56" r="43" stroke="#454a53" strokeWidth="10" fill="none" />
        <rect x="33" y="35" width="41" height="41" fill="#b3b6b9" stroke="#9b9ea2" />
        <rect x="41" y="43" width="25" height="25" fill="#a3aab0" />
        <g fill="#b4b6ba" fontFamily="Liberation Sans" fontWeight="bold" fontSize="16" textAnchor="middle">
          <text x="53" y="17">N</text>
          <text x="53" y="107">S</text>
          <text x="8" y="62">W</text>
          <text x="98" y="62">E</text>
        </g>
        <text x="53" y="60" fill="#4a5058" fontFamily="Open Sans" fontWeight="bold" fontSize="10" textAnchor="middle">TOP</text>
      </svg>
      <button className="mt-[13px] flex h-[17px] w-[47px] items-center justify-between rounded-sm border border-[#b5b8c4] bg-[#8f92a0] px-1 font-['Liberation_Sans',sans-serif] text-[11px] text-[#53565f]">
        WCS
        <Ico w={8} h={5}><path d="M0 0h8L4 5z" fill="#a9acb8" stroke="#b8bbc6" strokeWidth="0.5" /></Ico>
      </button>
    </div>
  )
}

function NavBar() {
  return (
    <div className="absolute top-[202px] right-[3px] flex h-[216px] w-[34px] flex-col items-center rounded-sm bg-[#5d6165] text-[#3e4247]">
      <Ico w={34} h={216}>
        <g stroke="currentColor" strokeWidth="1.300">
          <circle cx="28" cy="5" r="3.500" />
          <path d="m26 3 4 4M30 3l-4 4" />
          <path d="M17 17h11v12a11 11 0 1 1-11-12z" />
          <circle cx="17" cy="28" r="6" />
          <path d="m10 38 3-3a6 6 0 0 1 8 0l3 3" />
          <path d="M12 83c-2-5-5-8-7-9 1-2 4-1 6 2l-1-12c1-2 3-1 3 1l1 7V61c1-1 3-1 3 1v9l2-9c1-1 3 0 2 2l-1 9 4-6c2-1 3 0 2 2l-3 10-3 4z" />
          <path d="m6 91 15 15M21 91 6 106M6 95v-4h4M17 91h4v4M6 102v4h4" />
          <circle cx="22" cy="107" r="6" fill="#5d6165" />
          <path d="m26 111 3 4" strokeWidth="3" />
          <path d="M14 150v-15h-3l5-6 5 6h-3v15z" />
          <path d="M11 138c-8 2-8 7 0 8h9c9-1 9-6 1-8M11 142l-4 4 4 3" />
          <path d="M5 173h6v6H5zM13 173h6v6h-6zM22 173h6v6h-6zM5 183h16v13H5z" />
          <circle cx="28" cy="210" r="3.500" />
          <path d="M26 210h4" />
        </g>
        <path d="M14 49h6l-3 3zM14 122h6l-3 3zM14 161h6l-3 3zM10 185v9l7-4z" fill="currentColor" />
      </Ico>
    </div>
  )
}

function Crosshair() {
  return (
    <>
      <div className="absolute top-0 left-[676px] h-full w-px bg-white shadow-[0_0_0_1px_#151a20]" />
      <div className="absolute top-[306px] left-0 h-px w-full bg-white shadow-[0_0_0_1px_#151a20]" />
      <div className="absolute top-[302px] left-[672px] h-[9px] w-[9px] border border-white bg-[#212830]" />
    </>
  )
}

function Viewport() {
  return (
    <main className="flex flex-1 border-t-[5px] border-[#5a5a5a] bg-[#3a2d28]">
      <div className="relative min-h-[420px] flex-1 overflow-hidden bg-[#212830]">
        <GridLines />
        <p className="absolute top-[5px] left-[2px] text-xs text-[#e6e6e6]">[−][Top][2D Wireframe]</p>
        <div className="absolute top-2 right-3 flex items-center gap-[9px]">
          <button aria-label="Minimize drawing"><Ico w={12} h={11}><path d="M1 7h10v3H1z" fill="#fff" /></Ico></button>
          <button aria-label="Restore drawing"><Ico w={11}><path d="M1 4h6v6H1zM4 3V1h6v6H8" stroke="#e9e9e9" strokeWidth="1.800" /></Ico></button>
          <button aria-label="Close drawing"><Ico w={10}><path d="m1 1 8 8M9 1 1 9" stroke="#fff" strokeWidth="2.200" /></Ico></button>
        </div>
        <ViewCube />
        <NavBar />
        <svg width="90" height="84" viewBox="0 0 90 84" className="absolute bottom-0 left-2" aria-label="UCS icon" fill="none">
          <g shapeRendering="crispEdges" stroke="#fff">
            <path d="M6.500 17v51M6 68.500h53" />
            <path d="M2.500 63.500h9v10h-9z" />
          </g>
          <path d="m8 1 6 7 6-7M14 8v6M62 55l13 13M75 55 62 68" stroke="#cfd2d6" strokeWidth="1.200" />
        </svg>
        <Crosshair />
      </div>
      <div className="mr-[3px] w-[6px] border-r border-[#15a6c4] bg-linear-to-b from-[#b8d3ee] from-5% via-[#dbeafa] via-13% to-[#b4cdea] to-14%" />
    </main>
  )
}

function CommandLine() {
  return (
    <section className="flex border-t-[3px] border-[#6a6464] bg-white">
      <div className="flex w-[23px] flex-col items-center gap-[10px] bg-linear-to-b from-[#8a8a8a] to-[#404040] pt-1">
        <Ico w={18} h={5}><path d="M0 1h18M0 4h18" stroke="#c4c4c4" strokeDasharray="2 1" /></Ico>
        <button aria-label="Close command line"><Ico w={10}><path d="m1 1 8 8M9 1 1 9" stroke="#fff" strokeWidth="2.200" /></Ico></button>
        <button aria-label="Customize">
          <Ico w={16}><path d="M5 1a4 4 0 0 0-4 4c1 3 4 3 5 2l7 8 2-2-7-7c1-3-1-5-3-5l1 3-2 1z" fill="#dadada" stroke="#dadada" strokeWidth="0.8" /></Ico>
        </button>
      </div>
      <div className="flex-1 font-['DejaVu_Sans_Mono',monospace] text-xs">
        <pre className="border-b border-[#6b8f8f] bg-[#00ffff] pt-[9px] pb-[1px] pl-[3px] font-['DejaVu_Sans_Mono',monospace] leading-4 text-[#0a2b2b]">
          {'Command:  Tab Index <0>:\nAutomatic save to C:\\Users\\ihcra\\appdata\\local\\temp\\Drawing1_1_5245_4278.sv$ ...\nCommand:'}
        </pre>
        <div className="flex h-[22px] items-center pl-[5px]">
          <Ico w={16} h={14}>
            <rect x="0.500" y="0.500" width="15" height="13" rx="1" fill="#ccd1da" stroke="#9ba2ae" />
            <path d="m3 4 4 3-4 3M8 11h5" stroke="#333" strokeWidth="1.300" />
          </Ico>
          <Arrow className="mx-1 text-[#666]" />
          <input aria-label="Command" placeholder="Type a command" className="ml-[3px] flex-1 italic outline-none placeholder:text-[#8a8a8a]" />
        </div>
      </div>
    </section>
  )
}

/* ---------- status bar ---------- */

function LayoutTab({ label, active }: { label: string; active?: boolean }) {
  return (
    <button className={clsx('relative h-[20px] leading-[18px]', active ? 'w-[65px] font-bold text-white' : 'w-[67px] text-[#b5b5b5]')}>
      <svg viewBox="0 0 67 20" className="absolute inset-0" aria-hidden="true">
        <path d="M0 0c8 0 5 19 12 19h42c8 0 6-15 13-19z" fill={active ? 'url(#tab)' : '#595959'} />
      </svg>
      <span className="relative">{label}</span>
    </button>
  )
}

function Cell({ className, children }: { className: string; children: ReactNode }) {
  return <div className={clsx('flex h-[26px] shrink-0 items-center border border-[#757575] bg-[#4b4b4b]', className)}>{children}</div>
}

function Tool({ label, children, className, w = 18 }: { label: string; children: ReactNode; className?: string; w?: number }) {
  return (
    <button aria-label={label} className={className ?? 'text-[#b4b4b4]'}>
      <Ico w={w} h={18}>{children}</Ico>
    </button>
  )
}

function Scale() {
  return <path d="m9 1 2 7c1 4 3 6 6 8-3 1-5 0-8-3-3 3-5 4-8 3 3-2 5-4 6-8z" fill="currentColor" />
}

function StatusBar() {
  return (
    <footer className="flex h-[30px] justify-between border-t-2 border-b border-t-[#8b8b8b] border-b-[#222] bg-[#383838] text-xs">
      <div className="flex pl-[9px]">
        <LayoutTab label="Model" active />
        <LayoutTab label="Layout1" />
        <LayoutTab label="Layout2" />
        <button aria-label="New layout" className="ml-px">
          <Ico w={26} h={18} className="mb-2">
            <path d="M6 0h18c0 8-2 17-8 17H2C2 10 2 2 6 0z" fill="#565656" />
            <path d="M14 4v9M9.500 8.500h9" stroke="#c9c9c9" strokeWidth="2" />
          </Ico>
        </button>
      </div>
      <div className="flex gap-px text-white">
        <Cell className="w-[52px] justify-center"><button>MODEL</button></Cell>
        <Cell className="w-[67px] justify-between pr-[5px] pl-[3px]">
          <Tool label="Grid"><path d="M3.500 1v16M6.500 1v16M9.500 1v16M12.500 1v16M15.500 1v16M1 4h17M1 9h17M1 14h17" stroke="#2f8cff" strokeWidth="1.200" /></Tool>
          <Tool label="Snap"><path d="M1 2.500h16M1 5.500h16M1 8.500h16M1 11.500h16M1 14.500h16" stroke="#a9a9a9" strokeDasharray="1 2" /></Tool>
          <Arrow big />
        </Cell>
        <Cell className="w-[108px] justify-between pr-1 pl-1">
          <Tool label="Ortho"><path d="M2 2v13h14M2 10h5v5" stroke="currentColor" strokeWidth="1.600" /></Tool>
          <Tool label="Polar"><circle cx="8" cy="9" r="6.500" stroke="currentColor" strokeWidth="1.600" /><path d="M8 9h9M8 9l7-7" stroke="currentColor" strokeWidth="1.300" /></Tool>
          <Arrow big />
          <Tool label="Isometric"><path d="m2 1 14 16M8 1v16M16 4 9 9" stroke="currentColor" strokeWidth="1.500" /></Tool>
          <Arrow big />
        </Cell>
        <Cell className="w-[66px] justify-between px-[2px]">
          <Tool label="Object Tracking"><path d="M17 2 2 16h15" stroke="#2f8cff" strokeWidth="1.800" /><path d="M7 8h4v4H7z" fill="#2f8cff" /></Tool>
          <Tool label="Object Snap"><path d="M3 4h13v12H3z" stroke="#2f8cff" strokeWidth="2" /><circle cx="3.500" cy="3.500" r="2.800" fill="#19b51e" stroke="#0a4b0d" /></Tool>
          <Arrow big />
        </Cell>
        <Cell className="w-[109px] justify-between px-[3px]">
          <span className="flex gap-[7px]">
            <Tool label="Annotation Visibility" className="text-[#2f8cff]"><Scale /><circle cx="13" cy="4.500" r="3" stroke="currentColor" strokeWidth="1.500" fill="#4b4b4b" /></Tool>
            <Tool label="AutoScale"><Scale /><path d="m16 1-4 5h2l-1 4 5-5h-2z" fill="currentColor" stroke="#4b4b4b" strokeWidth="0.5" /></Tool>
            <Tool label="Annotation"><Scale /></Tool>
          </span>
          <button className="flex items-center gap-1">1:1 <Arrow big /></button>
        </Cell>
        <Cell className="w-[42px] justify-between px-1">
          <Tool label="Workspace">
            <circle cx="9" cy="9" r="4" stroke="currentColor" strokeWidth="3" />
            <path d="M9 2v3M9 13v3M2 9h3M13 9h3M4 4l2 2M12 12l2 2M14 4l-2 2M6 12l-2 2" stroke="currentColor" strokeWidth="2.500" />
          </Tool>
          <Arrow big />
        </Cell>
        <Cell className="w-[27px] justify-center"><Tool label="Annotation Monitor"><path d="M9 2v14M2 9h14" stroke="currentColor" strokeWidth="2" /></Tool></Cell>
        <Cell className="w-[26px] justify-center"><Tool label="Isolate Objects"><path d="M2 2h7v7H2zM8 15l3.500-6 3.500 6z" stroke="currentColor" strokeWidth="1.400" /><circle cx="13.500" cy="6.500" r="3" fill="#4b4b4b" stroke="currentColor" strokeWidth="1.400" /></Tool></Cell>
        <Cell className="w-[28px] justify-center"><Tool label="Hardware Acceleration"><circle cx="9" cy="9" r="8" fill="#0a5ec0" stroke="#2f8cff" /><path d="m9 9 4-3" stroke="#7db8ff" strokeWidth="1.500" /></Tool></Cell>
        <Cell className="w-[56px] justify-between pr-1 pl-2">
          <Tool label="Clean Screen"><path d="M1 3h16v12H1z" stroke="currentColor" strokeWidth="1.500" /><path d="M14 5v4l-4-4zM4 13V9l4 4z" fill="currentColor" /></Tool>
          <Tool label="Customization" w={16}><path d="M0 4h16M0 9h16M0 14h16" stroke="currentColor" strokeWidth="2" /></Tool>
        </Cell>
      </div>
    </footer>
  )
}

/* ---------- windows taskbar ---------- */

const APPS: { label: string; running?: boolean; active?: boolean; icon: ReactNode }[] = [
  {
    label: 'Edge',
    running: true,
    icon: (
      <>
        <circle cx="13" cy="13" r="12.500" fill="#1467b8" />
        <path d="M.5 12C1 5 6 .5 13 .5 20 .5 25.500 5 25.500 12c0 4-3 6-7 6-3 0-4-1-4-2s2-2 1-5c-1-3-5-4-8-3-3 .5-6 2-7 4z" fill="url(#edge)" />
        <path d="M11 14c0 6 5 9 13 6-3 4-7 6-11 5-6-2-8-9-4-13 2-1 2 0 2 2z" fill="#0b4c93" />
        <path d="M15 11c1 3-1 4-1 5 0 2 3 4 9 1 0 2-1 3-3 4-5 1-9-2-9-6 0-2 1-4 4-4z" fill="#cfe3ea" />
      </>
    ),
  },
  {
    label: 'File Explorer',
    icon: (
      <>
        <path d="M2 3h9l2 2h11v3H2z" fill="#e2991d" />
        <path d="M2 6h22v16H2z" fill="#ffd56a" />
        <path d="M6 13h14v9h-4v-4h-6v4H6z" fill="#3f8fd6" />
      </>
    ),
  },
  {
    label: 'Store',
    icon: (
      <>
        <path d="M8 8V5a5 4 0 0 1 10 0v3" stroke="#000" strokeWidth="2" />
        <path d="M1 7h24v18H1z" fill="#000" />
        <path d="M8 10h4.500v4.500H8z" fill="#f25022" />
        <path d="M14 10h4.500v4.500H14z" fill="#7fba00" />
        <path d="M8 16h4.500v4.500H8z" fill="#00a4ef" />
        <path d="M14 16h4.500v4.500H14z" fill="#ffb900" />
      </>
    ),
  },
  {
    label: 'Mail',
    icon: (
      <>
        <path d="M1 9 13 1l12 8v6H1z" fill="#0b4f9c" />
        <path d="M3 8h20v10H3z" fill="#f3f6fa" />
        <path d="m1 9 12 8 12-8v16H1z" fill="#2fa8ea" />
        <path d="m1 25 12-8 12 8z" fill="#1583d1" />
      </>
    ),
  },
  {
    label: 'Chrome',
    running: true,
    icon: (
      <>
        <path d="M13 13 3 7.500a11.500 11.500 0 0 1 20 0z" fill="#dd4b3e" />
        <path d="M13 13 23 7.500A11.500 11.500 0 0 1 13 24.500z" fill="#fbc832" />
        <path d="M13 13v11.500A11.500 11.500 0 0 1 3 7.500z" fill="#2fa25a" />
        <circle cx="13" cy="13" r="5.500" fill="#fff" />
        <circle cx="13" cy="13" r="4.400" fill="#4a84f0" />
      </>
    ),
  },
  {
    label: 'Firefox',
    running: true,
    icon: (
      <>
        <path d="M15 1c1 3 4 4 5 7l1-2c3 3 4 6 3 10-1 5-6 9-11 9C6 25 1 20 1.500 13 1.500 9 3 7 4 4l2 3c2-1 4-1 6 0 0-2 1-4 3-6z" fill="url(#fox)" />
        <circle cx="13" cy="14" r="5.500" fill="#7542d8" />
        <path d="M5 10c2-1 5 0 6 1 2 0 3 1 2 2-3 1-3 3-2 4-4 0-6-3-6-7z" fill="#ffa324" />
      </>
    ),
  },
  {
    label: 'AutoCAD',
    running: true,
    active: true,
    icon: (
      <>
        <path d="M1 1h24v24H1z" fill="#f9dcd2" />
        <path d="m4 22 7-19h5l7 19h-5l-1.500-4h-7L8 22zM10.500 14h5l-2.500-7z" fill="#b5252b" fillRule="evenodd" />
      </>
    ),
  },
  {
    label: 'Snip & Sketch',
    running: true,
    icon: (
      <>
        <ellipse cx="12" cy="9" rx="11" ry="7" transform="rotate(-20 12 9)" fill="#f3eeee" stroke="#e0575c" />
        <path d="m13 2 2 14M5 8l12 8M19 5l-8 10" stroke="#8f949c" strokeWidth="1.300" />
        <circle cx="21" cy="17" r="3" stroke="#1f86d6" strokeWidth="1.600" />
        <circle cx="15" cy="21.500" r="3" stroke="#1f86d6" strokeWidth="1.600" />
      </>
    ),
  },
]

function Tray() {
  return (
    <div className="flex items-center text-[#111]">
      <button aria-label="Show hidden icons"><Ico w={14} h={10}><path d="m1 8 6-6 6 6" stroke="currentColor" strokeWidth="1.300" /></Ico></button>
      <Ico w={18} className="ml-2">
        <path d="M4 13a4 4 0 0 1 0-7c2-5 8-5 10 0 4 1 4 6 1 7z" fill="#8a8a8a" stroke="#222" />
        <circle cx="13" cy="13" r="4.500" fill="#e01b24" />
        <path d="m11 11 4 4M15 11l-4 4" stroke="#fff" strokeWidth="1.300" />
      </Ico>
      <Ico w={16} h={18} className="ml-[9px]"><path d="M.5 5.500h13v8H.5zM14 8h2v3h-2z" stroke="currentColor" /><path d="M2 7h8v5H2z" fill="currentColor" /></Ico>
      <Ico w={16} className="ml-[9px]"><path d="M1 15C1 8 6 3 15 3M5 15c0-5 4-8 10-8M9 15c0-3 2-4 6-4" stroke="currentColor" strokeWidth="1.200" /><circle cx="13" cy="14.500" r="1.300" fill="currentColor" /></Ico>
      <Ico w={18} className="ml-[7px]"><path d="M1 6.500h3l4-4v13l-4-4H1zM10.500 6.500c1 1.500 1 3.500 0 5M13 5c2 2 2 6 0 8M15.500 3c3 3 3 9 0 12" stroke="currentColor" /></Ico>
      <Ico w={18} className="ml-2"><path d="M4 14a4 4 0 0 1 0-7c2-5 8-5 10 0 4 1 4 6 1 7z" fill="#fff" /><path d="M6 10h6M10 8l2 2-2 2" stroke="#cfe0ec" /></Ico>
      <Ico w={18} className="ml-[6px]"><path d="m5 2 4 2.700-4 2.700-4-2.700zM13 2l4 2.700-4 2.700-4-2.700zM5 7.400l4 2.700-4 2.700-4-2.700zM13 7.400l4 2.700-4 2.700-4-2.700zM9 11l4 2.700L9 16.400l-4-2.700z" fill="currentColor" /></Ico>
      <span className="ml-[11px] text-xs">ENG</span>
      <time className="w-[90px] text-center text-xs leading-[18px]">
        9:53 pm
        <br />
        03/04/2020
      </time>
      <button aria-label="Notifications" className="mr-[14px]">
        <Ico w={30} h={28}>
          <path d="M3 3h16v13H8l-3 4v-4H3z" fill="#000" />
          <path d="M6 6.500h10M6 9.500h10M6 12.500h10" stroke="#cfe0e6" />
          <circle cx="19" cy="19" r="7.500" fill="#c5cfd3" stroke="#8f9a9f" />
          <text x="19" y="23" fontSize="12" textAnchor="middle" fill="#000" fontFamily="Open Sans">8</text>
        </Ico>
      </button>
      <span className="h-full w-1 border-l border-[#8f9ca1]" />
    </div>
  )
}

function Taskbar() {
  return (
    <div className="flex h-[42px] border-t border-[#aebcc1] bg-[#cde1e7]">
      <button aria-label="Start menu" className="flex w-[50px] items-center justify-center">
        <Ico w={17}><path d="M0 2.500 7 1.500V8H0zM8 1.300 17 0v8H8zM0 9h7v6.500l-7-1zM8 9h9v8l-9-1.300z" fill="#000" /></Ico>
      </button>
      <label className="flex w-[358px] items-center gap-3 border border-[#c9ced0] bg-white pl-[11px]">
        <Ico w={18}><circle cx="11" cy="6.500" r="5.500" stroke="#111" strokeWidth="1.300" /><path d="m7 10.500-6 6.500" stroke="#111" strokeWidth="1.300" /></Ico>
        <input aria-label="Search Windows" placeholder="Type here to search" className="flex-1 text-sm outline-none placeholder:text-[#2b2b2b]" />
      </label>
      <button aria-label="Task View" className="flex w-[52px] items-center justify-center">
        <Ico w={18}><path d="M1 1v3h11V1M1.500 6h10v7h-10zM1 17v-2h11v2M16 1v4M16 9v8" stroke="#111" /><path d="M15 5h2v3h-2z" fill="#111" /></Ico>
      </button>
      {APPS.map(app => (
        <button
          key={app.label}
          aria-label={app.label}
          className={clsx('flex w-[52px] flex-col items-center justify-between pt-2', app.active && 'bg-[#e9f1f4]')}
        >
          <Ico w={26}>{app.icon}</Ico>
          {app.running && <span className={clsx('h-[2px] bg-[#0a6fd6]', app.active ? 'w-full' : 'w-[42px]')} />}
        </button>
      ))}
      <div className="flex-1" />
      <Tray />
    </div>
  )
}

export default function App() {
  return (
    <div className="flex min-h-screen flex-col overflow-hidden bg-[#383838] font-['Open_Sans',sans-serif] text-xs">
      <Defs />
      <TitleBar />
      <RibbonTabs />
      <Ribbon />
      <FileTabs />
      <Viewport />
      <CommandLine />
      <StatusBar />
      <Taskbar />
    </div>
  )
}
